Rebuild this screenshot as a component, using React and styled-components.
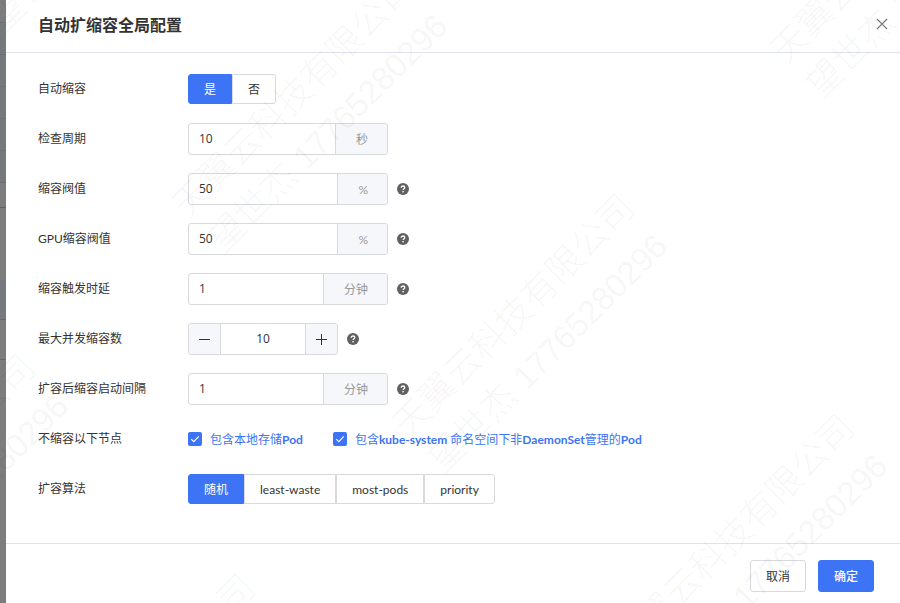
import React, { useState } from 'react';
import styled, { createGlobalStyle } from 'styled-components';

const fontStack = `Lato, "Noto Sans CJK SC", sans-serif`
const inputFont = `"Open Sans", "Noto Sans CJK SC", sans-serif`

const GlobalStyle = createGlobalStyle`
  :root{
    --primary: #3d73f5;
    --border-color: #d8d9dc;
    --line-color: #dfe1ec;
    --fill-color: #f5f7fa;
    --font-color: #333333;
    --muted-color: #999999;
  }
  *{
    box-sizing: border-box;
  }
  body{
    margin: 0;
    background: #7d7d7d;
    color: var(--font-color);
    font-family: ${fontStack};
    font-size: 12px;
    line-height: 20px;
    overflow: hidden;
  }
  button, input{
    font-family: inherit;
    font-size: inherit;
    color: inherit;
  }
`

const algorithms = ['随机', 'least-waste', 'most-pods', 'priority']

const marks = [
  { x: 92, y: -106 },
  { x: 312, y: 114 },
  { x: 532, y: 334 },
  { x: 752, y: 554 },
  { x: -67, y: 494 },
  { x: 153, y: 714 },
  { x: 910, y: -40 },
]

function HelpIcon() {
  return (
    <Help type='button' aria-label='help'>
      <svg width='12' height='12' viewBox='0 0 12 12'>
        <circle cx='6' cy='6' r='6' fill='#606060' />
        <path d='M4.2 4.7C4.2 3.6 5 3 6 3s1.8.6 1.8 1.6c0 1.2-1.7 1.2-1.7 2.5' fill='none' stroke='#fff' strokeWidth='1.3' />
        <rect x='5.4' y='8' width='1.4' height='1.4' fill='#fff' />
      </svg>
    </Help>
  )
}

function UnitField({ id, label, unit, initial, help }) {
  const [value, setValue] = useState(initial)
  return (
    <Row>
      <Label htmlFor={id}>{label}</Label>
      <InputGroup>
        <input id={id} value={value} onChange={(e) => setValue(e.target.value)} />
        <Unit>{unit}</Unit>
      </InputGroup>
      {help && <HelpIcon />}
    </Row>
  )
}

function RadioField({ name, label, options }) {
  const [selected, setSelected] = useState(options[0])
  return (
    <Row>
      <Label as='span' id={name}>{label}</Label>
      <RadioGroup role='radiogroup' aria-labelledby={name}>
        {options.map((item) => (
          <RadioButton key={item}>
            <input type='radio' name={name} checked={selected === item} onChange={() => setSelected(item)} />
            <span>{item}</span>
          </RadioButton>
        ))}
      </RadioGroup>
    </Row>
  )
}

function CheckField({ children }) {
  const [checked, setChecked] = useState(true)
  return (
    <CheckLabel>
      <CheckBox $checked={checked}>
        <input type='checkbox' checked={checked} onChange={() => setChecked(!checked)} />
        <svg width='14' height='14' viewBox='0 0 14 14'>
          <path d='M3.2 7.2l2.6 2.5 5-5.4' fill='none' stroke='#fff' strokeWidth='1.1' />
        </svg>
      </CheckBox>
      <CheckText>{children}</CheckText>
    </CheckLabel>
  )
}

export default function App() {
  const [count, setCount] = useState(10)

  return (
    <Page>
      <GlobalStyle />
      <Backdrop />
      <Drawer>
        <Header>
          <h1>自动扩缩容全局配置</h1>
          <CloseButton type='button' aria-label='close'>
            <svg width='12' height='12' viewBox='0 0 12 12'>
              <path d='M1 1l10 10M11 1L1 11' stroke='#7c7c7c' strokeWidth='1.2' />
            </svg>
          </CloseButton>
        </Header>

        <Form>
          <RadioField name='autoShrink' label='自动缩容' options={['是', '否']} />
          <UnitField id='period' label='检查周期' unit='秒' initial='10' />
          <UnitField id='threshold' label='缩容阀值' unit='%' initial='50' help />
          <UnitField id='gpuThreshold' label='GPU缩容阀值' unit='%' initial='50' help />
          <UnitField id='delay' label='缩容触发时延' unit='分钟' initial='1' help />
          <Row>
            <Label htmlFor='count'>最大并发缩容数</Label>
            <Stepper>
              <button type='button' aria-label='minus' onClick={() => setCount(count - 1)}>
                <svg width='11' height='11' viewBox='0 0 11 11'>
                  <path d='M0 5.5h11' stroke='#333' />
                </svg>
              </button>
              <input id='count' value={count} onChange={(e) => setCount(Number(e.target.value) || 0)} />
              <button type='button' aria-label='plus' onClick={() => setCount(count + 1)}>
                <svg width='11' height='11' viewBox='0 0 11 11'>
                  <path d='M0 5.5h11M5.5 0v11' stroke='#333' />
                </svg>
              </button>
            </Stepper>
            <HelpIcon />
          </Row>
          <UnitField id='interval' label='扩容后缩容启动间隔' unit='分钟' initial='1' help />
          <Row>
            <Label as='span'>不缩容以下节点</Label>
            <CheckGroup>
              <CheckField>包含本地存储<b>Pod</b></CheckField>
              <CheckField>包含<b>kube-system</b> 命名空间下非<b>DaemonSet</b>管理的<b>Pod</b></CheckField>
            </CheckGroup>
          </Row>
          <RadioField name='algorithm' label='扩容算法' options={algorithms} />
        </Form>

        <Footer>
          <Button type='button'>取消</Button>
          <Button type='button' $primary>确定</Button>
        </Footer>
      </Drawer>

      <WatermarkLayer>
        {marks.map((mark) => (
          <Watermark key={`${mark.x}-${mark.y}`} $x={mark.x} $y={mark.y}>
            <div>天翼云科技有限公司</div>
            <div>望世杰 <span>17765280296</span></div>
          </Watermark>
        ))}
      </WatermarkLayer>
    </Page>
  )
}


const Page = styled.div`
  display: flex;
  min-height: 100vh;
  position: relative;
`

// edge of the dimmed page, with its menu rows and table lines
const Backdrop = styled.div`
  width: 6px;
  background:
    linear-gradient(#6c6e76, #6c6e76) 0 182px / 100% 1px no-repeat,
    linear-gradient(#606060, #606060) 0 207px / 100% 1px no-repeat,
    linear-gradient(#686a70, #686a70) 0 319px / 100% 1px no-repeat,
    linear-gradient(#686868, #686868) 0 359px / 100% 1px no-repeat,
    repeating-linear-gradient(#6e7178 0 1px, #76797c 1px 32px) 0 22px / 100% 160px no-repeat,
    linear-gradient(#767a7e, #767a7e) 0 280px / 100% 39px no-repeat,
    #7d7d7d;
`

const Drawer = styled.main`
  flex: 1;
  display: flex;
  flex-direction: column;
  background: #ffffff;
`

const Header = styled.header`
  display: flex;
  align-items: center;
  justify-content: space-between;
  padding: 13px 12px 15px 32px;
  border-bottom: 1px solid var(--line-color);
  h1{
    margin: 0;
    font-size: 16px;
    line-height: 24px;
    font-weight: 600;
  }
`

const CloseButton = styled.button`
  display: flex;
  padding: 0 0 2px;
  border: none;
  background: none;
  cursor: pointer;
`

const Form = styled.form`
  flex: 1;
  display: flex;
  flex-direction: column;
  gap: 18px;
  padding: 20px 32px;
`

const Row = styled.div`
  display: flex;
  align-items: center;
  min-height: 32px;
`

const Label = styled.label`
  width: 150px;
`

const InputGroup = styled.div`
  display: flex;
  width: 200px;
  height: 32px;
  border: 1px solid var(--border-color);
  border-radius: 3px;
  overflow: hidden;
  input{
    flex: 1;
    min-width: 0;
    padding: 0 10px 2px;
    border: none;
    outline: none;
    background: none;
    font-family: ${inputFont};
  }
`

const Unit = styled.span`
  display: flex;
  align-items: center;
  padding: 2px 19px 0 20px;
  border-left: 1px solid var(--border-color);
  background: var(--fill-color);
  color: var(--muted-color);
`

const Stepper = styled.div`
  display: flex;
  width: 150px;
  height: 32px;
  border: 1px solid var(--border-color);
  border-radius: 3px;
  overflow: hidden;
  button{
    display: flex;
    align-items: center;
    justify-content: center;
    width: 31px;
    padding: 0;
    border: none;
    background: var(--fill-color);
    cursor: pointer;
  }
  input{
    flex: 1;
    min-width: 0;
    padding: 0 0 2px;
    border: solid var(--border-color);
    border-width: 0 1px;
    outline: none;
    font-family: ${inputFont};
    text-align: center;
  }
`

const Help = styled.button`
  display: flex;
  margin-left: 9px;
  padding: 0;
  border: none;
  background: none;
  cursor: pointer;
`

const RadioGroup = styled.div`
  display: flex;
`

const RadioButton = styled.label`
  position: relative;
  cursor: pointer;
  input{
    position: absolute;
    inset: 0;
    margin: 0;
    opacity: 0;
  }
  span{
    display: flex;
    align-items: center;
    height: 30px;
    padding: 2px 15px 0;
    border: 1px solid var(--border-color);
  }
  &:first-child span{
    border-radius: 3px 0 0 3px;
  }
  &:last-child span{
    border-radius: 0 3px 3px 0;
  }
  input:checked + span{
    background: var(--primary);
    border-color: var(--primary);
    color: #ffffff;
  }
`

const CheckGroup = styled.div`
  display: flex;
  gap: 30px;
`

const CheckLabel = styled.label`
  display: flex;
  align-items: center;
  color: var(--primary);
  cursor: pointer;
`

const CheckText = styled.span`
  padding-top: 2px;
  b{
    font-weight: 700;
  }
`

const CheckBox = styled.span`
  display: flex;
  position: relative;
  margin-right: 8px;
  border-radius: 2px;
  background: ${(props) => (props.$checked ? 'var(--primary)' : 'var(--border-color)')};
  input{
    position: absolute;
    inset: 0;
    margin: 0;
    opacity: 0;
  }
`

const Footer = styled.footer`
  display: flex;
  justify-content: flex-end;
  gap: 12px;
  padding: 16px 26px 11px;
  border-top: 1px solid var(--line-color);
`

const Button = styled.button`
  height: 32px;
  padding: 0 15px 2px;
  border: 1px solid ${(props) => (props.$primary ? 'var(--primary)' : 'var(--border-color)')};
  border-radius: 3px;
  background: ${(props) => (props.$primary ? 'var(--primary)' : '#ffffff')};
  color: ${(props) => (props.$primary ? '#ffffff' : 'var(--font-color)')};
  font-weight: ${(props) => (props.$primary ? 500 : 400)};
  cursor: pointer;
`

const WatermarkLayer = styled.div`
  position: absolute;
  inset: 0;
  overflow: hidden;
  pointer-events: none;
`

const Watermark = styled.div`
  position: absolute;
  left: ${(props) => props.$x}px;
  top: ${(props) => props.$y}px;
  transform: translate(-50%, -50%) rotate(-45deg);
  color: rgba(0, 0, 0, 0.05);
  font-family: "Liberation Sans", "Noto Sans CJK SC", sans-serif;
  font-size: 36px;
  font-weight: 300;
  line-height: 50px;
  white-space: nowrap;
  span{
    font-size: 33px;
  }
`
